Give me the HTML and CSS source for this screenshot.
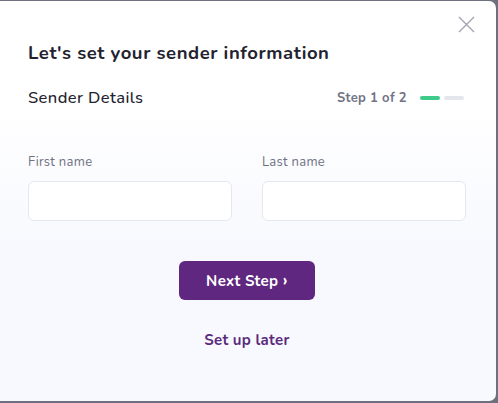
FILE: index.html
```html
<!DOCTYPE html>
<html>
<head>
<meta charset="utf-8">
<link rel="stylesheet" href="styles.css">
</head>
<body>
<div class="modal">
  <button class="close" aria-label="Close">
    <svg width="17" height="17" viewBox="0 0 17 17"><path d="M1 1L16 16M16 1L1 16" stroke="#a3a5b1" stroke-width="1.4" fill="none"/></svg>
  </button>
  <h1 class="title">Let's set your sender information</h1>
  <div class="subhead">
    <h2 class="section">Sender Details</h2>
    <div class="step">
      <span class="step-text">Step 1 of 2</span>
      <span class="bar bar-on"></span>
      <span class="bar bar-off"></span>
    </div>
  </div>
  <div class="fields">
    <label class="field">
      <span class="label">First name</span>
      <input class="input" type="text">
    </label>
    <label class="field">
      <span class="label">Last name</span>
      <input class="input" type="text">
    </label>
  </div>
  <div class="actions">
    <button class="primary">Next Step <span class="chev">›</span></button>
    <a class="later" href="#">Set up later</a>
  </div>
</div>
</body>
</html>
```
FILE: styles.css
```css
html, body {
  margin: 0;
  padding: 0;
}
body {
  background: #6e7080;
  width: 498px;
  height: 403px;
  overflow: hidden;
  font-family: "Nunito", "Lato", "Open Sans", sans-serif;
}
.modal {
  position: relative;
  box-sizing: border-box;
  margin-top: 1px;
  width: 496px;
  height: 400px;
  border-radius: 0 7px 7px 0;
  background: linear-gradient(180deg, #ffffff 0%, #ffffff 25%, #f8f9fe 60%, #f8f9fe 100%);
  padding: 40px 30px 0 28px;
}
.close {
  position: absolute;
  top: 15px;
  right: 21px;
  width: 17px;
  height: 17px;
  padding: 0;
  border: 0;
  background: none;
  display: flex;
}
.title {
  margin: 0;
  font-size: 18.5px;
  line-height: 24px;
  font-weight: 700;
  color: #23232f;
  letter-spacing: 0.55px;
}
.subhead {
  margin-top: 22px;
  display: flex;
  align-items: center;
  justify-content: space-between;
}
.section {
  margin: 0;
  font-size: 16.5px;
  line-height: 22px;
  font-weight: 500;
  color: #23232f;
  letter-spacing: 0.4px;
}
.step {
  display: flex;
  align-items: center;
  gap: 4px;
  margin-right: 2px;
}
.step-text {
  font-size: 13px;
  font-weight: 700;
  color: #717385;
  margin-right: 9px;
  letter-spacing: 0.35px;
}
.bar {
  display: block;
  width: 20px;
  height: 4px;
  border-radius: 2px;
}
.bar-on { background: #3ecb8a; }
.bar-off { background: #e4e6ee; }
.fields {
  margin-top: 44px;
  display: grid;
  grid-template-columns: 204px 204px;
  column-gap: 30px;
}
.field {
  display: flex;
  flex-direction: column;
}
.label {
  font-size: 13px;
  line-height: 18px;
  color: #6f7183;
  margin-bottom: 10px;
  letter-spacing: 0.3px;
}
.input {
  box-sizing: border-box;
  height: 40px;
  border: 1px solid #e6e7ef;
  border-radius: 6px;
  background: #ffffff;
  outline: none;
}
.actions {
  margin-top: 40px;
  display: flex;
  flex-direction: column;
  align-items: center;
}
.primary {
  width: 136px;
  height: 39px;
  border: 0;
  border-radius: 6px;
  background: #5f277f;
  color: #ffffff;
  font-family: inherit;
  font-size: 15px;
  font-weight: 700;
  padding: 0;
  letter-spacing: 0.3px;
}
.chev {
  font-size: 17px;
  font-weight: 700;
}
.later {
  margin-top: 30px;
  font-size: 15px;
  font-weight: 700;
  color: #5a2b7c;
  text-decoration: none;
  letter-spacing: 0.3px;
}
```
